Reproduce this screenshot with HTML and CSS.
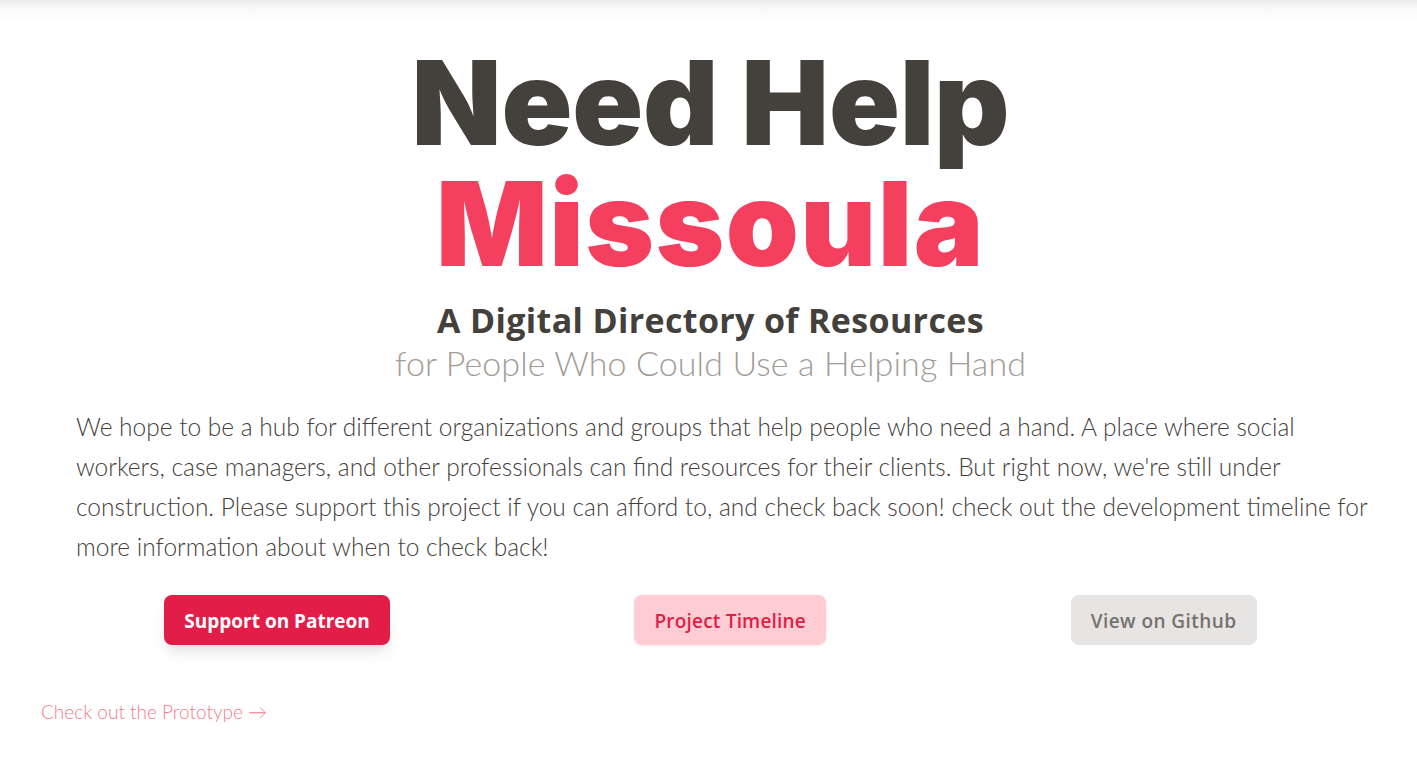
FILE: index.html
```html
<!DOCTYPE html>
<html lang="en">
<head>
<meta charset="utf-8">
<title>Need Help Missoula</title>
<link rel="stylesheet" href="styles.css">
</head>
<body>
<div class="top-shade"></div>
<main class="container">
  <h1 class="title">
    <span class="title-main">Need Help</span>
    <span class="title-city">Missoula</span>
  </h1>
  <h2 class="subtitle">
    <span class="subtitle-strong">A Digital Directory of Resources</span>
    <span class="subtitle-light">for People Who Could Use a Helping Hand</span>
  </h2>
  <p class="intro">We hope to be a hub for different organizations and groups that help people who need a hand. A place where social workers, case managers, and other professionals can find resources for their clients. But right now, we're still under construction. Please support this project if you can afford to, and check back soon! check out the development timeline for more information about when to check back!</p>
  <div class="actions">
    <a class="btn btn-primary" href="#">Support on Patreon</a>
    <a class="btn btn-soft" href="#">Project Timeline</a>
    <a class="btn btn-muted" href="#">View on Github</a>
  </div>
  <a class="proto-link" href="#">Check out the Prototype →</a>
</main>
</body>
</html>
```
FILE: styles.css
```css
* { box-sizing: border-box; }

html, body {
  margin: 0;
  padding: 0;
  background: #ffffff;
}

body {
  font-family: "Lato", "Open Sans", sans-serif;
  color: #44403c;
}

.top-shade {
  height: 22px;
  background: linear-gradient(to bottom, rgba(0, 0, 0, 0.075), rgba(0, 0, 0, 0.02) 45%, rgba(0, 0, 0, 0));
}

.container {
  padding: 0 38px 0 42px;
}

.title {
  margin: 20px 0 0;
  text-align: center;
  font-family: "Inter", sans-serif;
  font-weight: 900;
  font-size: 117px;
  line-height: 121px;
  letter-spacing: -0.2px;
}

.title-main,
.title-city {
  display: block;
}

.title-main { color: #44403c; }

.title-city {
  color: #f43f5e;
  letter-spacing: 1.4px;
}

.subtitle {
  margin: 16px 0 0;
  text-align: center;
  font-size: 34px;
  line-height: 40px;
}

.subtitle-strong,
.subtitle-light {
  display: block;
}

.subtitle-strong {
  font-family: "Open Sans", sans-serif;
  font-weight: 700;
  color: #44403c;
  letter-spacing: 0.35px;
}

.subtitle-light {
  margin-top: 3px;
  font-family: "Lato", sans-serif;
  font-weight: 300;
  color: #a29c98;
  letter-spacing: 0.1px;
}

.intro {
  margin: 24px 0 0 34px;
  font-family: "Lato", sans-serif;
  font-weight: 300;
  font-size: 24.5px;
  line-height: 40px;
  color: #44403c;
}

.actions {
  margin-top: 28px;
  display: flex;
  justify-content: space-around;
  align-items: center;
}

.btn {
  display: inline-block;
  height: 50px;
  padding: 2px 20px 0;
  border-radius: 8px;
  font-family: "Open Sans", sans-serif;
  font-size: 19px;
  line-height: 48px;
  text-decoration: none;
}

.btn-primary {
  background: #e11d48;
  color: #ffffff;
  font-weight: 700;
  box-shadow: 0 10px 15px -3px rgba(0, 0, 0, 0.1), 0 4px 6px -2px rgba(0, 0, 0, 0.05);
}

.btn-soft {
  background: #fecdd3;
  color: #e11d48;
  font-weight: 600;
  letter-spacing: 0.2px;
  box-shadow: 0 1px 3px rgba(0, 0, 0, 0.08);
}

.btn-muted {
  background: #e7e5e4;
  color: #78716c;
  font-weight: 600;
  letter-spacing: 0.45px;
}

.proto-link {
  display: inline-block;
  margin-top: 53px;
  margin-left: -1px;
  font-family: "Lato", sans-serif;
  font-weight: 300;
  font-size: 19px;
  line-height: 28px;
  color: #f27c8d;
  text-decoration: none;
}
```
